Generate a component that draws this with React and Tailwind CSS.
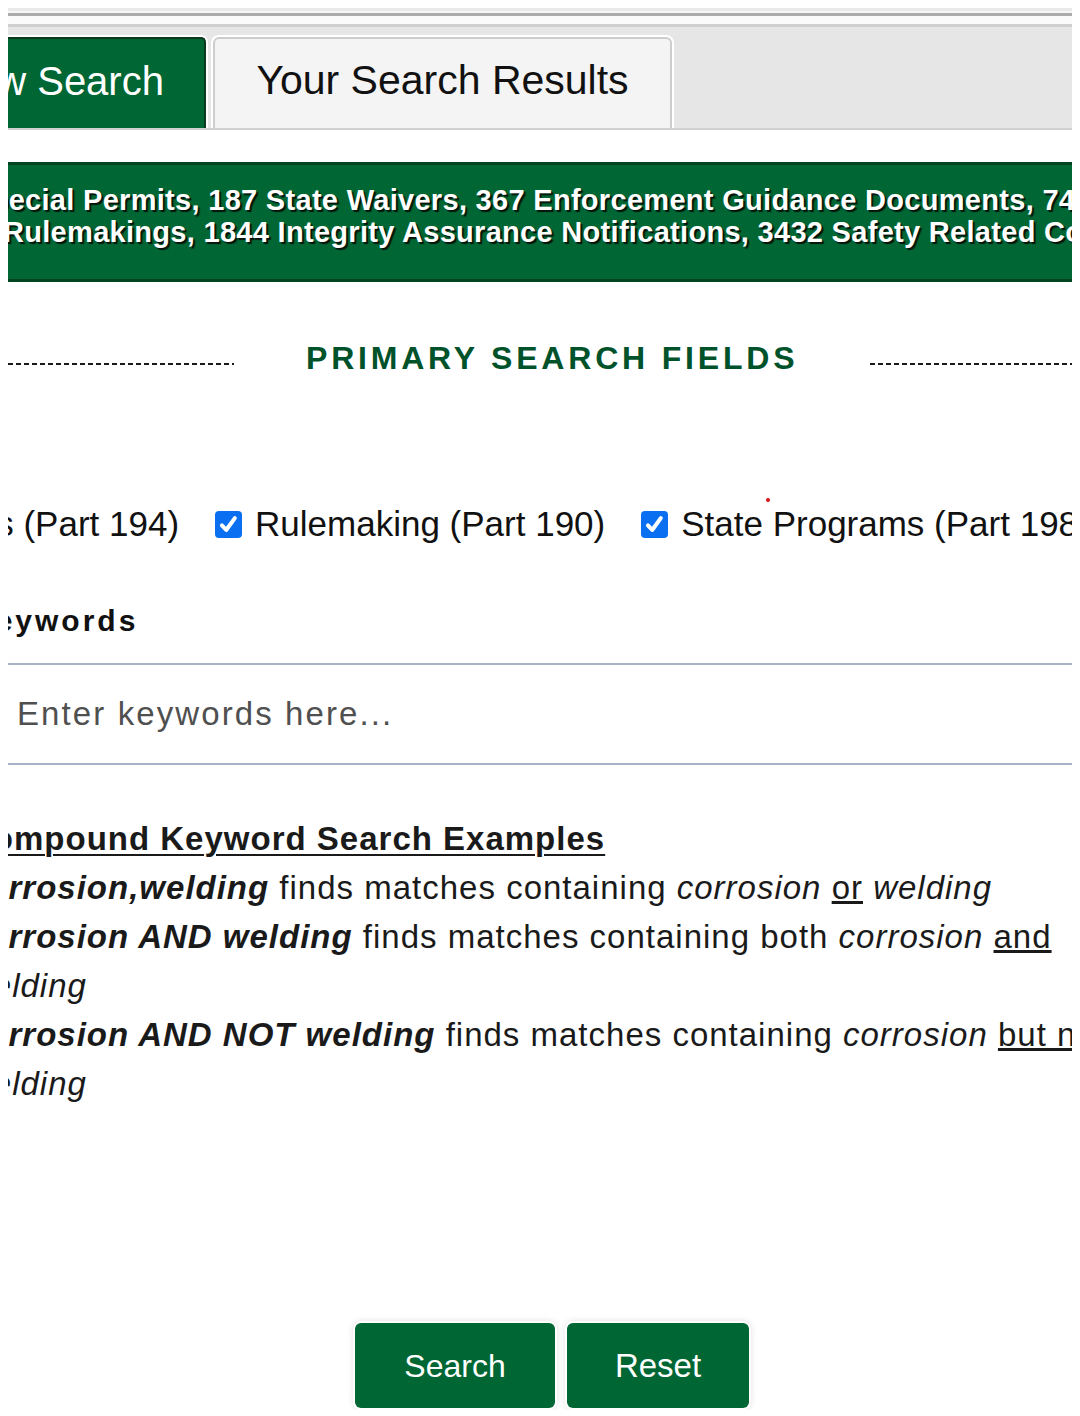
import React from 'react';

// page is shown clipped at both sides: x 8..1072
const FONT = "font-['Liberation_Sans',Arial,sans-serif]";

function Check({ label, children }) {
  return (
    <div className="flex items-center shrink-0">
      <span className="w-[27px] h-[27px] rounded-[4px] bg-[#0b6ff2] flex items-center justify-center mr-[13px]">
        <svg viewBox="0 0 16 16" className="w-[23px] h-[23px]" fill="none" stroke="white" strokeWidth="2.8" strokeLinecap="round" strokeLinejoin="round">
          <path d="M3.4 8.6 L6.4 11.8 L12.4 3.6" />
        </svg>
      </span>
      <span>{label}</span>
      {children}
    </div>
  );
}

export default function App() {
  return (
    <div className={`min-h-[1416px] bg-white pt-2 ${FONT}`}>
      <div className="mx-2 overflow-hidden">
        {/* top rules */}
        <div className="h-[3px] bg-[#e9e9e9]" />
        <div className="h-[2px] bg-[#f6f6f6]" />
        <div className="h-[3px] bg-[#acacac]" />
        <div className="h-[8px] bg-[#fbfbfb]" />

        {/* TABS */}
        <div className="h-[106px] bg-[#e6e6e6] border-t-[3px] border-b-2 border-[#d0d0d0] flex items-end">
          <div className="-ml-[106px] pt-[2px] px-[2px] bg-white rounded-t-[7px] shrink-0">
            <div className="w-[302px] h-[91px] bg-[#006633] border-2 border-b-0 border-[#0b3a20] rounded-t-[5px] text-white text-[40px] flex items-center justify-center pb-[6px]">
              New Search
            </div>
          </div>
          <div className="ml-[3px] pt-[2px] px-[2px] bg-white rounded-t-[8px] shrink-0">
            <div className="w-[459px] h-[91px] bg-[#f4f4f4] border-2 border-b-0 border-[#cdcdcd] rounded-t-[6px] text-[#111] text-[41px] flex items-center justify-center pb-[6px]">
              Your Search Results
            </div>
          </div>
        </div>

        {/* COUNTS BANNER */}
        <div className="mt-8 h-[120px] bg-[#006633] border-y-[3px] border-[#00451f] pt-[19px] text-white font-bold text-[29px] tracking-[0.3px] leading-[32px] whitespace-nowrap [text-shadow:2px_2px_1px_#06140b]">
          <div className="-ml-[37px]">Special Permits, 187 State Waivers, 367 Enforcement Guidance Documents, 74 Advisory Bulletins</div>
          <div className="-ml-[5px]">Rulemakings, 1844 Integrity Assurance Notifications, 3432 Safety Related Condition Reports</div>
        </div>

        {/* HEADING */}
        <div className="mt-[56px] flex items-center">
          <div className="w-[226px] h-[2px] mt-[12px] shrink-0 bg-[repeating-linear-gradient(90deg,#1b1b1b_0_5px,transparent_5px_8px)]" />
          <h2 className="mx-[72px] text-[32px] leading-[40px] font-bold tracking-[3.8px] text-[#00522a] whitespace-nowrap">
            PRIMARY SEARCH FIELDS
          </h2>
          <div className="flex-1 h-[2px] mt-[12px] bg-[repeating-linear-gradient(90deg,#1b1b1b_0_5px,transparent_5px_8px)]" />
        </div>

        {/* CHECKBOXES */}
        <div className="relative mt-[126px] flex items-center gap-[36px] text-[35px] leading-[40px] text-[#111] whitespace-nowrap">
          <span className="-ml-[111px] shrink-0">Notices (Part 194)</span>
          <Check label="Rulemaking (Part 190)" />
          <Check label="State Programs (Part 198)" />
          <span className="absolute left-[758px] top-[-6px] w-[4px] h-[4px] rounded-full bg-[#e01010]" />
        </div>

        {/* KEYWORDS */}
        <div className="mt-[59px] -ml-[37px] text-[30px] leading-[36px] font-bold tracking-[3px] text-[#111]">
          Keywords
        </div>
        <input
          type="text"
          placeholder="Enter keywords here..."
          className="mt-[24px] block w-full h-[102px] border-y-2 border-x-0 border-[#a7b4c6] pl-[9px] text-[33px] tracking-[2.1px] text-[#333] placeholder:text-[#505050] outline-none"
        />

        {/* EXAMPLES */}
        <div className="mt-[49px] -ml-[40px] w-[1167px] text-[33px] leading-[49px] tracking-[1px] text-[#1a1a1a]">
          <p className="font-bold underline underline-offset-[4px] decoration-2">Compound Keyword Search Examples</p>
          <p>
            <b><i>corrosion,welding</i></b> finds matches containing <i>corrosion</i> <u>or</u> <i>welding</i>
          </p>
          <p>
            <b><i>corrosion AND welding</i></b> finds matches containing both <i>corrosion</i> <u>and</u> <i>welding</i>
          </p>
          <p>
            <b><i>corrosion AND NOT welding</i></b> finds matches containing <i>corrosion</i> <u>but not</u> <i>welding</i>
          </p>
        </div>

        {/* BUTTONS */}
        <div className="mt-[213px] pl-[24px] flex justify-center gap-[8px]">
          <button className="w-[204px] h-[89px] p-[2px] rounded-[8px] bg-white shadow-[0_0_6px_rgba(0,0,0,0.12)]">
            <span className="w-full h-full rounded-[6px] bg-[#006633] text-white text-[32px] flex items-center justify-center">Search</span>
          </button>
          <button className="w-[186px] h-[89px] p-[2px] rounded-[8px] bg-white shadow-[0_0_6px_rgba(0,0,0,0.12)]">
            <span className="w-full h-full rounded-[6px] bg-[#006633] text-white text-[33px] flex items-center justify-center">Reset</span>
          </button>
        </div>
      </div>
    </div>
  );
}
